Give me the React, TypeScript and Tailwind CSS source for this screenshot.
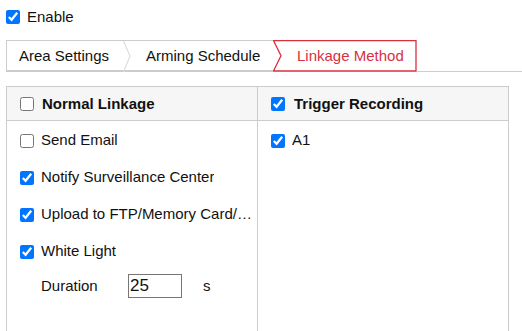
import React from "react";

function Check({ checked = false }: { checked?: boolean }) {
  return (
    <input
      type="checkbox"
      defaultChecked={checked}
      className="m-0 h-[14px] w-[14px] shrink-0 accent-[#0075ff]"
    />
  );
}

function Row({ label, checked }: { label: string; checked?: boolean }) {
  return (
    <div className="flex h-[37px] items-center gap-[7px] pl-[13px] pr-[3px] pt-[2px]">
      <Check checked={checked} />
      <span className="truncate">{label}</span>
    </div>
  );
}

export default function App() {
  return (
    <div className="h-[331px] w-[522px] overflow-hidden bg-white pt-[10px] font-['Liberation_Sans',Arial,sans-serif] text-[15px] text-[#111]">
      <div className="flex h-[14px] items-center gap-[7px] pl-[6px]">
        <Check checked />
        <span>Enable</span>
      </div>

      {/* tabs */}
      <div className="mt-[16px] flex h-[32px] pl-[6px]">
        <div className="flex h-full border-t border-l border-b-2 border-[#ccc]">
          <div className="flex w-[116px] items-center pl-[12px] pr-[8px] pt-[1px]">Area Settings</div>
          <svg width="8" height="31" viewBox="0 0 8 31" className="shrink-0">
            <polyline points="0.5,0 7,15 0.5,31" fill="none" stroke="#ddd" strokeWidth="1.2" />
          </svg>
          <div className="flex w-[142px] items-center pl-[15px] pt-[1px]">Arming Schedule</div>
        </div>
        <div className="relative flex h-[32px] w-[144px] shrink-0 items-center pl-[24px] pt-[1px] text-[#d8303f]">
          <svg width="144" height="32" viewBox="0 0 144 32" className="absolute left-0 top-0">
            <polygon
              points="0.5,0.5 143,0.5 143,31 0.5,31 8,15.75"
              fill="white"
              stroke="#d8303f"
              strokeWidth="1.3"
            />
          </svg>
          <span className="relative">Linkage Method</span>
        </div>
        <div className="flex-1 border-b border-[#ccc]" />
      </div>

      {/* linkage table */}
      <div className="ml-[6px] mt-[14px] grid h-[260px] w-[503px] grid-cols-[251px_1fr] border-x border-t border-[#ccc]">
        <div className="border-r border-[#ccc]">
          <div className="flex h-[34px] items-center gap-[8px] border-b border-[#ccc] bg-[#f6f6f6] pl-[13px] pt-[1px] font-bold">
            <Check />
            <span>Normal Linkage</span>
          </div>
          <Row label="Send Email" />
          <Row label="Notify Surveillance Center" checked />
          <Row label="Upload to FTP/Memory Card/NAS" checked />
          <Row label="White Light" checked />
          <div className="flex items-center pl-[34px] pt-[5px]">
            <span className="w-[87px]">Duration</span>
            <input
              type="text"
              defaultValue="25"
              className="h-[24px] w-[54px] border border-[#767676] px-[1px] text-[17px] text-[#111] outline-none"
            />
            <span className="ml-[21px]">s</span>
          </div>
        </div>
        <div>
          <div className="flex h-[34px] items-center gap-[9px] border-b border-[#ccc] bg-[#f6f6f6] pl-[13px] pt-[1px] font-bold">
            <Check checked />
            <span>Trigger Recording</span>
          </div>
          <Row label="A1" checked />
        </div>
      </div>
    </div>
  );
}
